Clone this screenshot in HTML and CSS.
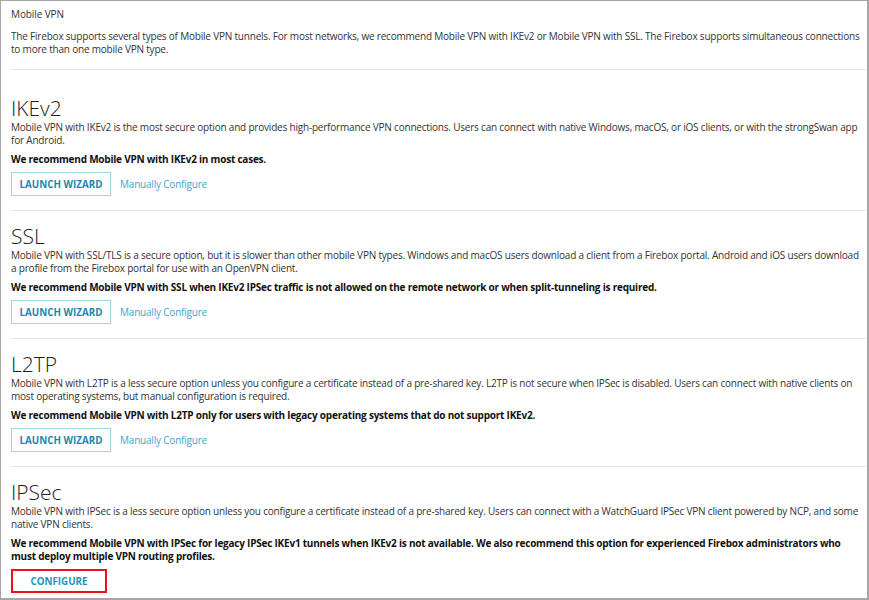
FILE: index.html
```html
<!DOCTYPE html>
<html>
<head>
<meta charset="utf-8">
<link rel="stylesheet" href="styles.css">
</head>
<body>
<div class="frame">
  <div class="intro">
    <div class="title">Mobile VPN</div>
    <p class="desc">The Firebox supports several types of Mobile VPN tunnels. For most networks, we recommend Mobile VPN with IKEv2 or Mobile VPN with SSL. The Firebox supports simultaneous connections to more than one mobile VPN type.</p>
  </div>
  <div class="section first">
    <h2 class="heading">IKEv2</h2>
    <p class="desc">Mobile VPN with IKEv2 is the most secure option and provides high-performance VPN connections. Users can connect with native Windows, macOS, or iOS clients, or with the strongSwan app for Android.</p>
    <p class="rec">We recommend Mobile VPN with IKEv2 in most cases.</p>
    <div class="actions">
      <button class="btn">LAUNCH WIZARD</button>
      <a class="link" href="#">Manually Configure</a>
    </div>
  </div>
  <div class="section">
    <h2 class="heading">SSL</h2>
    <p class="desc">Mobile VPN with SSL/TLS is a secure option, but it is slower than other mobile VPN types. Windows and macOS users download a client from a Firebox portal. Android and iOS users download a profile from the Firebox portal for use with an OpenVPN client.</p>
    <p class="rec">We recommend Mobile VPN with SSL when IKEv2 IPSec traffic is not allowed on the remote network or when split-tunneling is required.</p>
    <div class="actions">
      <button class="btn">LAUNCH WIZARD</button>
      <a class="link" href="#">Manually Configure</a>
    </div>
  </div>
  <div class="section">
    <h2 class="heading">L2TP</h2>
    <p class="desc">Mobile VPN with L2TP is a less secure option unless you configure a certificate instead of a pre-shared key. L2TP is not secure when IPSec is disabled. Users can connect with native clients on most operating systems, but manual configuration is required.</p>
    <p class="rec">We recommend Mobile VPN with L2TP only for users with legacy operating systems that do not support IKEv2.</p>
    <div class="actions">
      <button class="btn">LAUNCH WIZARD</button>
      <a class="link" href="#">Manually Configure</a>
    </div>
  </div>
  <div class="section last">
    <h2 class="heading">IPSec</h2>
    <p class="desc">Mobile VPN with IPSec is a less secure option unless you configure a certificate instead of a pre-shared key. Users can connect with a WatchGuard IPSec VPN client powered by NCP, and some native VPN clients.</p>
    <p class="rec">We recommend Mobile VPN with IPSec for legacy IPSec IKEv1 tunnels when IKEv2 is not available. We also recommend this option for experienced Firebox administrators who must deploy multiple VPN routing profiles.</p>
    <div class="actions">
      <button class="btn highlight">CONFIGURE</button>
    </div>
  </div>
</div>
</body>
</html>
```

FILE: styles.css
```css
html, body {
  margin: 0;
  padding: 0;
  background: #ffffff;
}
body {
  font-family: "Open Sans", "DejaVu Sans", sans-serif;
  font-size: 10px;
  color: #333333;
}
.frame {
  box-sizing: border-box;
  width: 869px;
  height: 600px;
  border: 1px solid #a6a6a6;
  border-right-width: 2px;
  border-bottom-width: 2px;
  padding: 0 1px 0 10px;
  overflow: hidden;
}
.intro {
  padding-top: 7px;
  padding-bottom: 13px;
  border-bottom: 1px solid #e6e6e6;
}
.title {
  line-height: 13px;
  letter-spacing: -0.1px;
}
.desc {
  margin: 0;
  line-height: 13px;
  letter-spacing: -0.2px;
  padding-right: 5px;
}
.intro .desc {
  margin-top: 9px;
}
.section {
  padding-top: 12px;
  padding-bottom: 14px;
  border-bottom: 1px solid #e6e6e6;
}
.section.first {
  padding-top: 25px;
}
.section.last {
  border-bottom: none;
}
.heading {
  margin: 0;
  font-size: 21px;
  font-weight: 300;
  line-height: 26px;
  color: #222222;
}
.rec {
  margin: 6px 0 0;
  line-height: 13px;
  font-weight: 700;
  color: #111111;
  letter-spacing: -0.22px;
  padding-right: 5px;
}
.actions {
  display: flex;
  align-items: center;
  gap: 9px;
  margin-top: 6px;
}
.btn {
  box-sizing: border-box;
  height: 24px;
  width: 100px;
  padding: 0;
  background: #ffffff;
  border: 1px solid #9dd7e6;
  font-family: "Open Sans", "DejaVu Sans", sans-serif;
  font-size: 9.8px;
  font-weight: 700;
  color: #1a88b0;
  cursor: pointer;
}
.btn.highlight {
  width: 96px;
  border: 2px solid #e8141b;
  color: #2592b8;
}
.link {
  color: #3ca6cc;
  text-decoration: none;
  font-size: 10px;
  letter-spacing: -0.2px;
}
```
